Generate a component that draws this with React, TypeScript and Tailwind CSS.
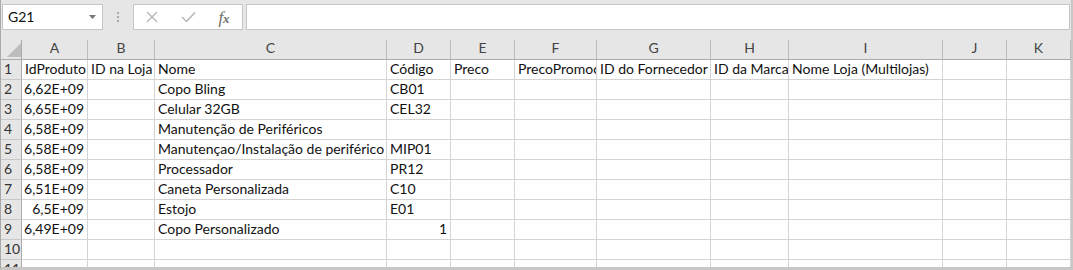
import React from 'react';

const COLS = ['A', 'B', 'C', 'D', 'E', 'F', 'G', 'H', 'I', 'J', 'K'];

const RAW: string[][] = [
  ['IdProduto', 'ID na Loja', 'Nome', 'Código', 'Preco', 'PrecoPromocional', 'ID do Fornecedor', 'ID da Marca', 'Nome Loja (Multilojas)'],
  ['6,62E+09', '', 'Copo Bling', 'CB01'],
  ['6,65E+09', '', 'Celular 32GB', 'CEL32'],
  ['6,58E+09', '', 'Manutenção de Periféricos', ''],
  ['6,58E+09', '', 'Manutençao/Instalação de periférico', 'MIP01'],
  ['6,58E+09', '', 'Processador', 'PR12'],
  ['6,51E+09', '', 'Caneta Personalizada', 'C10'],
  ['6,5E+09', '', 'Estojo', 'E01'],
  ['6,49E+09', '', 'Copo Personalizado', '1'],
  [],
  [],
];

const ROWS = RAW.map((r) => COLS.map((_, i) => r[i] ?? ''));

function isNum(s: string) {
  return /^\d/.test(s);
}

export default function App() {
  return (
    <div className="w-[1073px] h-[270px] overflow-hidden flex flex-col bg-white border-l border-l-[#a9a9a9] border-r-2 border-r-[#c9c6c6] border-b-[3px] border-b-[#c9c6c6] font-['Lato',sans-serif] text-[14px] text-[#111]">
      {/* Formula bar */}
      <div className="h-10 shrink-0 bg-[#e6e6e6] flex items-start pt-1 px-px">
        <div className="w-[101px] h-[26px] bg-white border border-[#c6c6c6] flex items-center justify-between pl-[5px] pr-[6px]">
          <span className="leading-[1.2]">G21</span>
          <svg width="7" height="4" viewBox="0 0 7 4">
            <polygon points="0,0 7,0 3.5,4" fill="#777777" />
          </svg>
        </div>
        <div className="w-[30px] h-[26px] flex flex-col items-center justify-center gap-[2px]">
          <div className="w-[2px] h-[2px] bg-[#a8a8a8]" />
          <div className="w-[2px] h-[2px] bg-[#a8a8a8]" />
          <div className="w-[2px] h-[2px] bg-[#a8a8a8]" />
        </div>
        <div className="w-[110px] h-[26px] bg-white border border-[#c6c6c6] flex items-center">
          <div className="w-[36px] flex justify-center">
            <svg width="12" height="12" viewBox="0 0 12 12">
              <path d="M1 1 L11 11 M11 1 L1 11" stroke="#b4b4b4" strokeWidth="1.3" fill="none" />
            </svg>
          </div>
          <div className="w-[36px] flex justify-center">
            <svg width="15" height="12" viewBox="0 0 15 12">
              <path d="M1 6 L5.5 10.5 L14 1.5" stroke="#b4b4b4" strokeWidth="1.4" fill="none" />
            </svg>
          </div>
          <div className="w-[36px] flex justify-center">
            <span className="font-['Liberation_Serif',serif] italic text-[17px] leading-none text-[#6e6e6e]">
              f<span className="text-[13px] font-semibold">x</span>
            </span>
          </div>
        </div>
        <div className="flex-1 ml-[3px] h-[26px] bg-white border border-[#c6c6c6]" />
      </div>

      {/* Grid */}
      <div className="grid grid-cols-[21px_66px_67px_232px_64px_64px_82px_114px_78px_154px_64px_64px] auto-rows-[20px]">
        <div className="bg-[#e6e6e6] border-r border-b border-[#ababab] flex items-end justify-end pb-[2px]">
          <svg width="14" height="14" viewBox="0 0 14 14">
            <polygon points="14,0 14,14 0,14" fill="#bdbdbd" />
          </svg>
        </div>
        {COLS.map((c) => (
          <div
            key={c}
            className="bg-[#e6e6e6] border-r border-r-[#bdbdbd] border-b border-b-[#ababab] flex items-center justify-center pb-[3px] text-[#444] leading-[1.2]"
          >
            {c}
          </div>
        ))}
        {ROWS.map((row, ri) => (
          <React.Fragment key={ri}>
            <div className="bg-[#e6e6e6] border-r border-r-[#ababab] border-b border-b-[#c8c8c8] flex items-center pl-[3px] text-[#333] leading-[1.2]">
              {ri + 1}
            </div>
            {row.map((v, ci) => (
              <div
                key={ci}
                className={
                  'border-r border-b border-[#d4d4d4] flex items-center px-[3px] overflow-hidden whitespace-nowrap leading-[1.2] ' +
                  (isNum(v) ? 'justify-end' : 'justify-start')
                }
              >
                {v}
              </div>
            ))}
          </React.Fragment>
        ))}
      </div>
    </div>
  );
}
